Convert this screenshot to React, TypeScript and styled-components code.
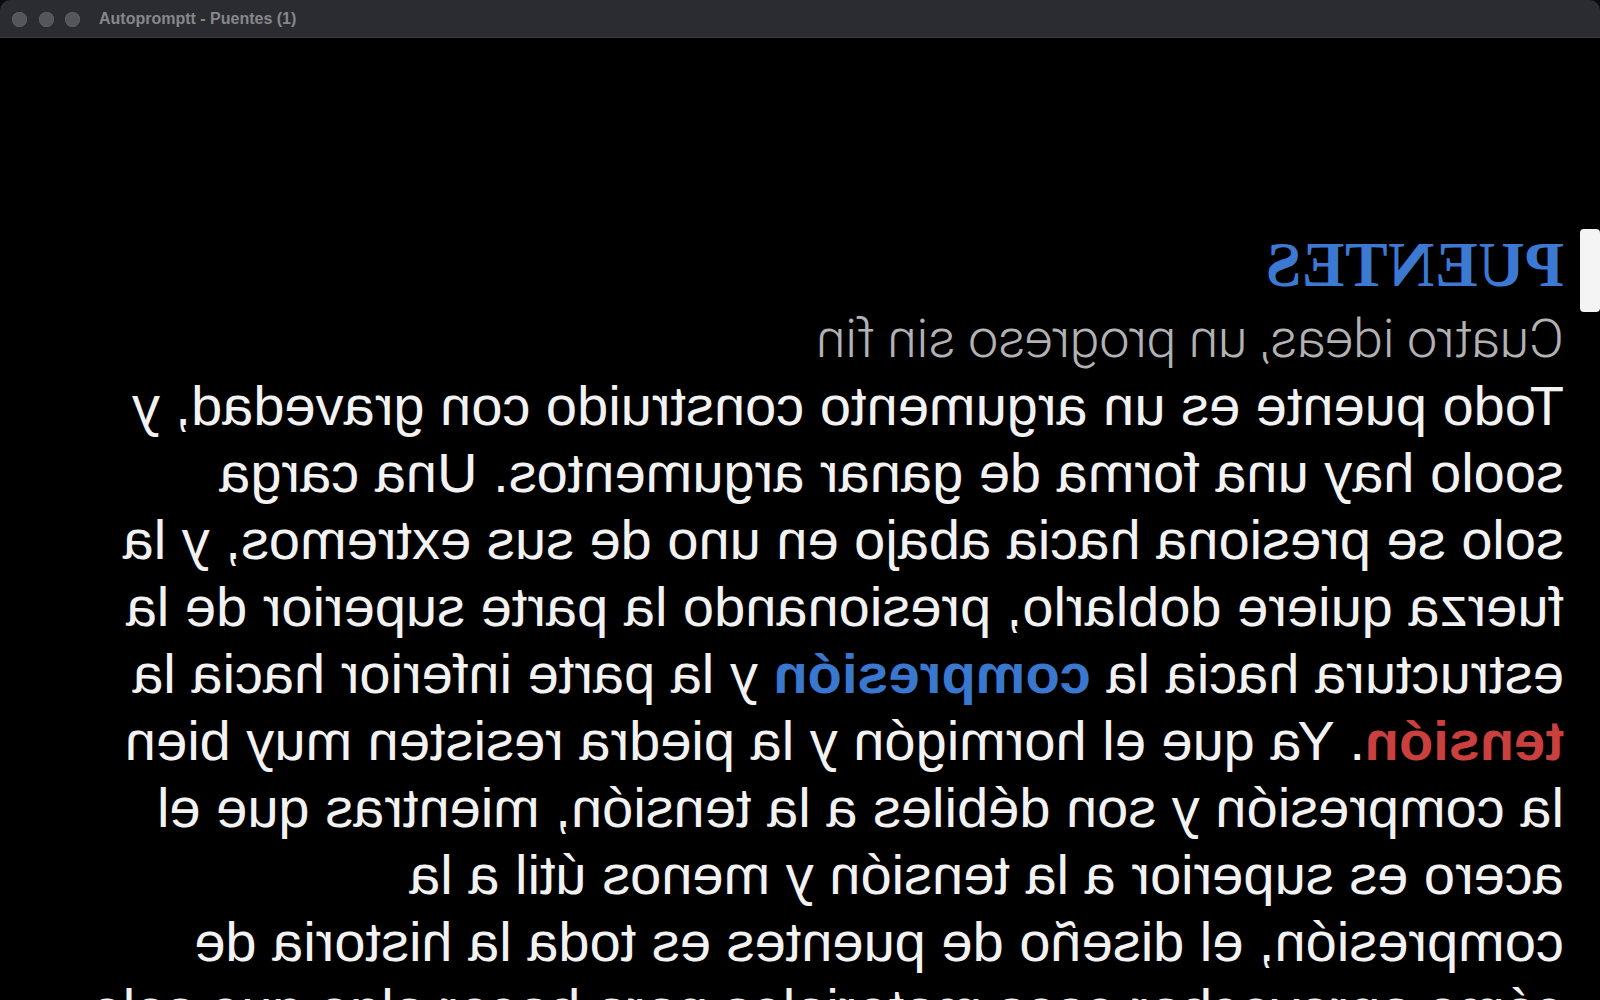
import React from "react";
import styled, { createGlobalStyle } from "styled-components";

const GlobalStyle = createGlobalStyle`
  html, body {
    margin: 0;
    padding: 0;
    height: 100%;
    background: #0b0b0d;
    overflow: hidden;
  }
  #root {
    height: 100%;
  }
`;

const Window = styled.div`
  height: 100vh;
  display: flex;
  flex-direction: column;
  background: #000;
  border-radius: 10px 10px 0 0;
  overflow: hidden;
`;

const TitleBar = styled.header`
  flex: 0 0 38px;
  display: flex;
  align-items: center;
  padding: 1px 0 0 12px;
  box-sizing: border-box;
  background: #2b2c31;
  border-bottom: 1px solid #3a3b40;
`;

const Lights = styled.div`
  display: flex;
  gap: 11.5px;
  margin-right: 19px;
`;

const Light = styled.span`
  width: 15px;
  height: 15px;
  border-radius: 50%;
  background: #55565b;
  box-shadow: inset 0 0 0 0.5px #626368;
`;

const WindowTitle = styled.span`
  font-family: "Liberation Sans", Arial, sans-serif;
  font-weight: 700;
  font-size: 16px;
  color: #86878c;
`;

const Viewport = styled.main`
  flex: 1;
  position: relative;
  overflow: hidden;
  background: #000;
`;

/* teleprompter mirror: everything flipped for the beam splitter */
const Script = styled.div`
  transform: scaleX(-1);
  padding: 190px 80px 0 36px;
`;

const Heading = styled.h1`
  margin: 0 0 3px;
  font-family: "Liberation Serif", "Times New Roman", serif;
  font-weight: 700;
  font-size: 64px;
  line-height: 74px;
  color: #3b79d3;
  letter-spacing: 0.5px;
`;

const Subheading = styled.h2`
  margin: 0;
  font-family: Roboto, "Liberation Sans", sans-serif;
  font-weight: 300;
  font-size: 54px;
  line-height: 67px;
  letter-spacing: -0.4px;
  color: #b2b2b4;
`;

const Body = styled.div`
  font-family: "Liberation Sans", Arial, sans-serif;
  font-size: 56px;
  line-height: 67px;
  color: #f2f2f2;
`;

const Line = styled.div`
  white-space: nowrap;
`;

const Mark = styled.span<{ $tone: "blue" | "red" }>`
  font-weight: 700;
  color: ${({ $tone }) => ($tone === "blue" ? "#3a78d0" : "#c9403f")};
`;

const ScrollThumb = styled.div`
  position: absolute;
  top: 191px;
  right: 0;
  width: 20px;
  height: 83px;
  border-radius: 4px;
  background: #f4f4f4;
`;

function App() {
  return (
    <>
      <GlobalStyle />
      <Window>
        <TitleBar>
          <Lights>
            <Light />
            <Light />
            <Light />
          </Lights>
          <WindowTitle>Autopromptt - Puentes (1)</WindowTitle>
        </TitleBar>
        <Viewport>
          <Script>
            <Heading>PUENTES</Heading>
            <Subheading>Cuatro ideas, un progreso sin fin</Subheading>
            <Body>
              <Line>Todo puente es un argumento construido con gravedad, y</Line>
              <Line>soolo hay una forma de ganar argumentos. Una carga</Line>
              <Line>solo se presiona hacia abajo en uno de sus extremos, y la</Line>
              <Line>fuerza quiere doblarlo, presionando la parte superior de la</Line>
              <Line>
                estructura hacia la <Mark $tone="blue">compresión</Mark> y la parte inferior hacia la
              </Line>
              <Line>
                <Mark $tone="red">tensión</Mark>. Ya que el hormigón y la piedra resisten muy bien
              </Line>
              <Line>la compresión y son débiles a la tensión, mientras que el</Line>
              <Line>acero es superior a la tensión y menos útil a la</Line>
              <Line>compresión, el diseño de puentes es toda la historia de</Line>
              <Line>cómo aprovechar esos materiales para hacer algo que solo</Line>
            </Body>
          </Script>
          <ScrollThumb />
        </Viewport>
      </Window>
    </>
  );
}

export default App;
